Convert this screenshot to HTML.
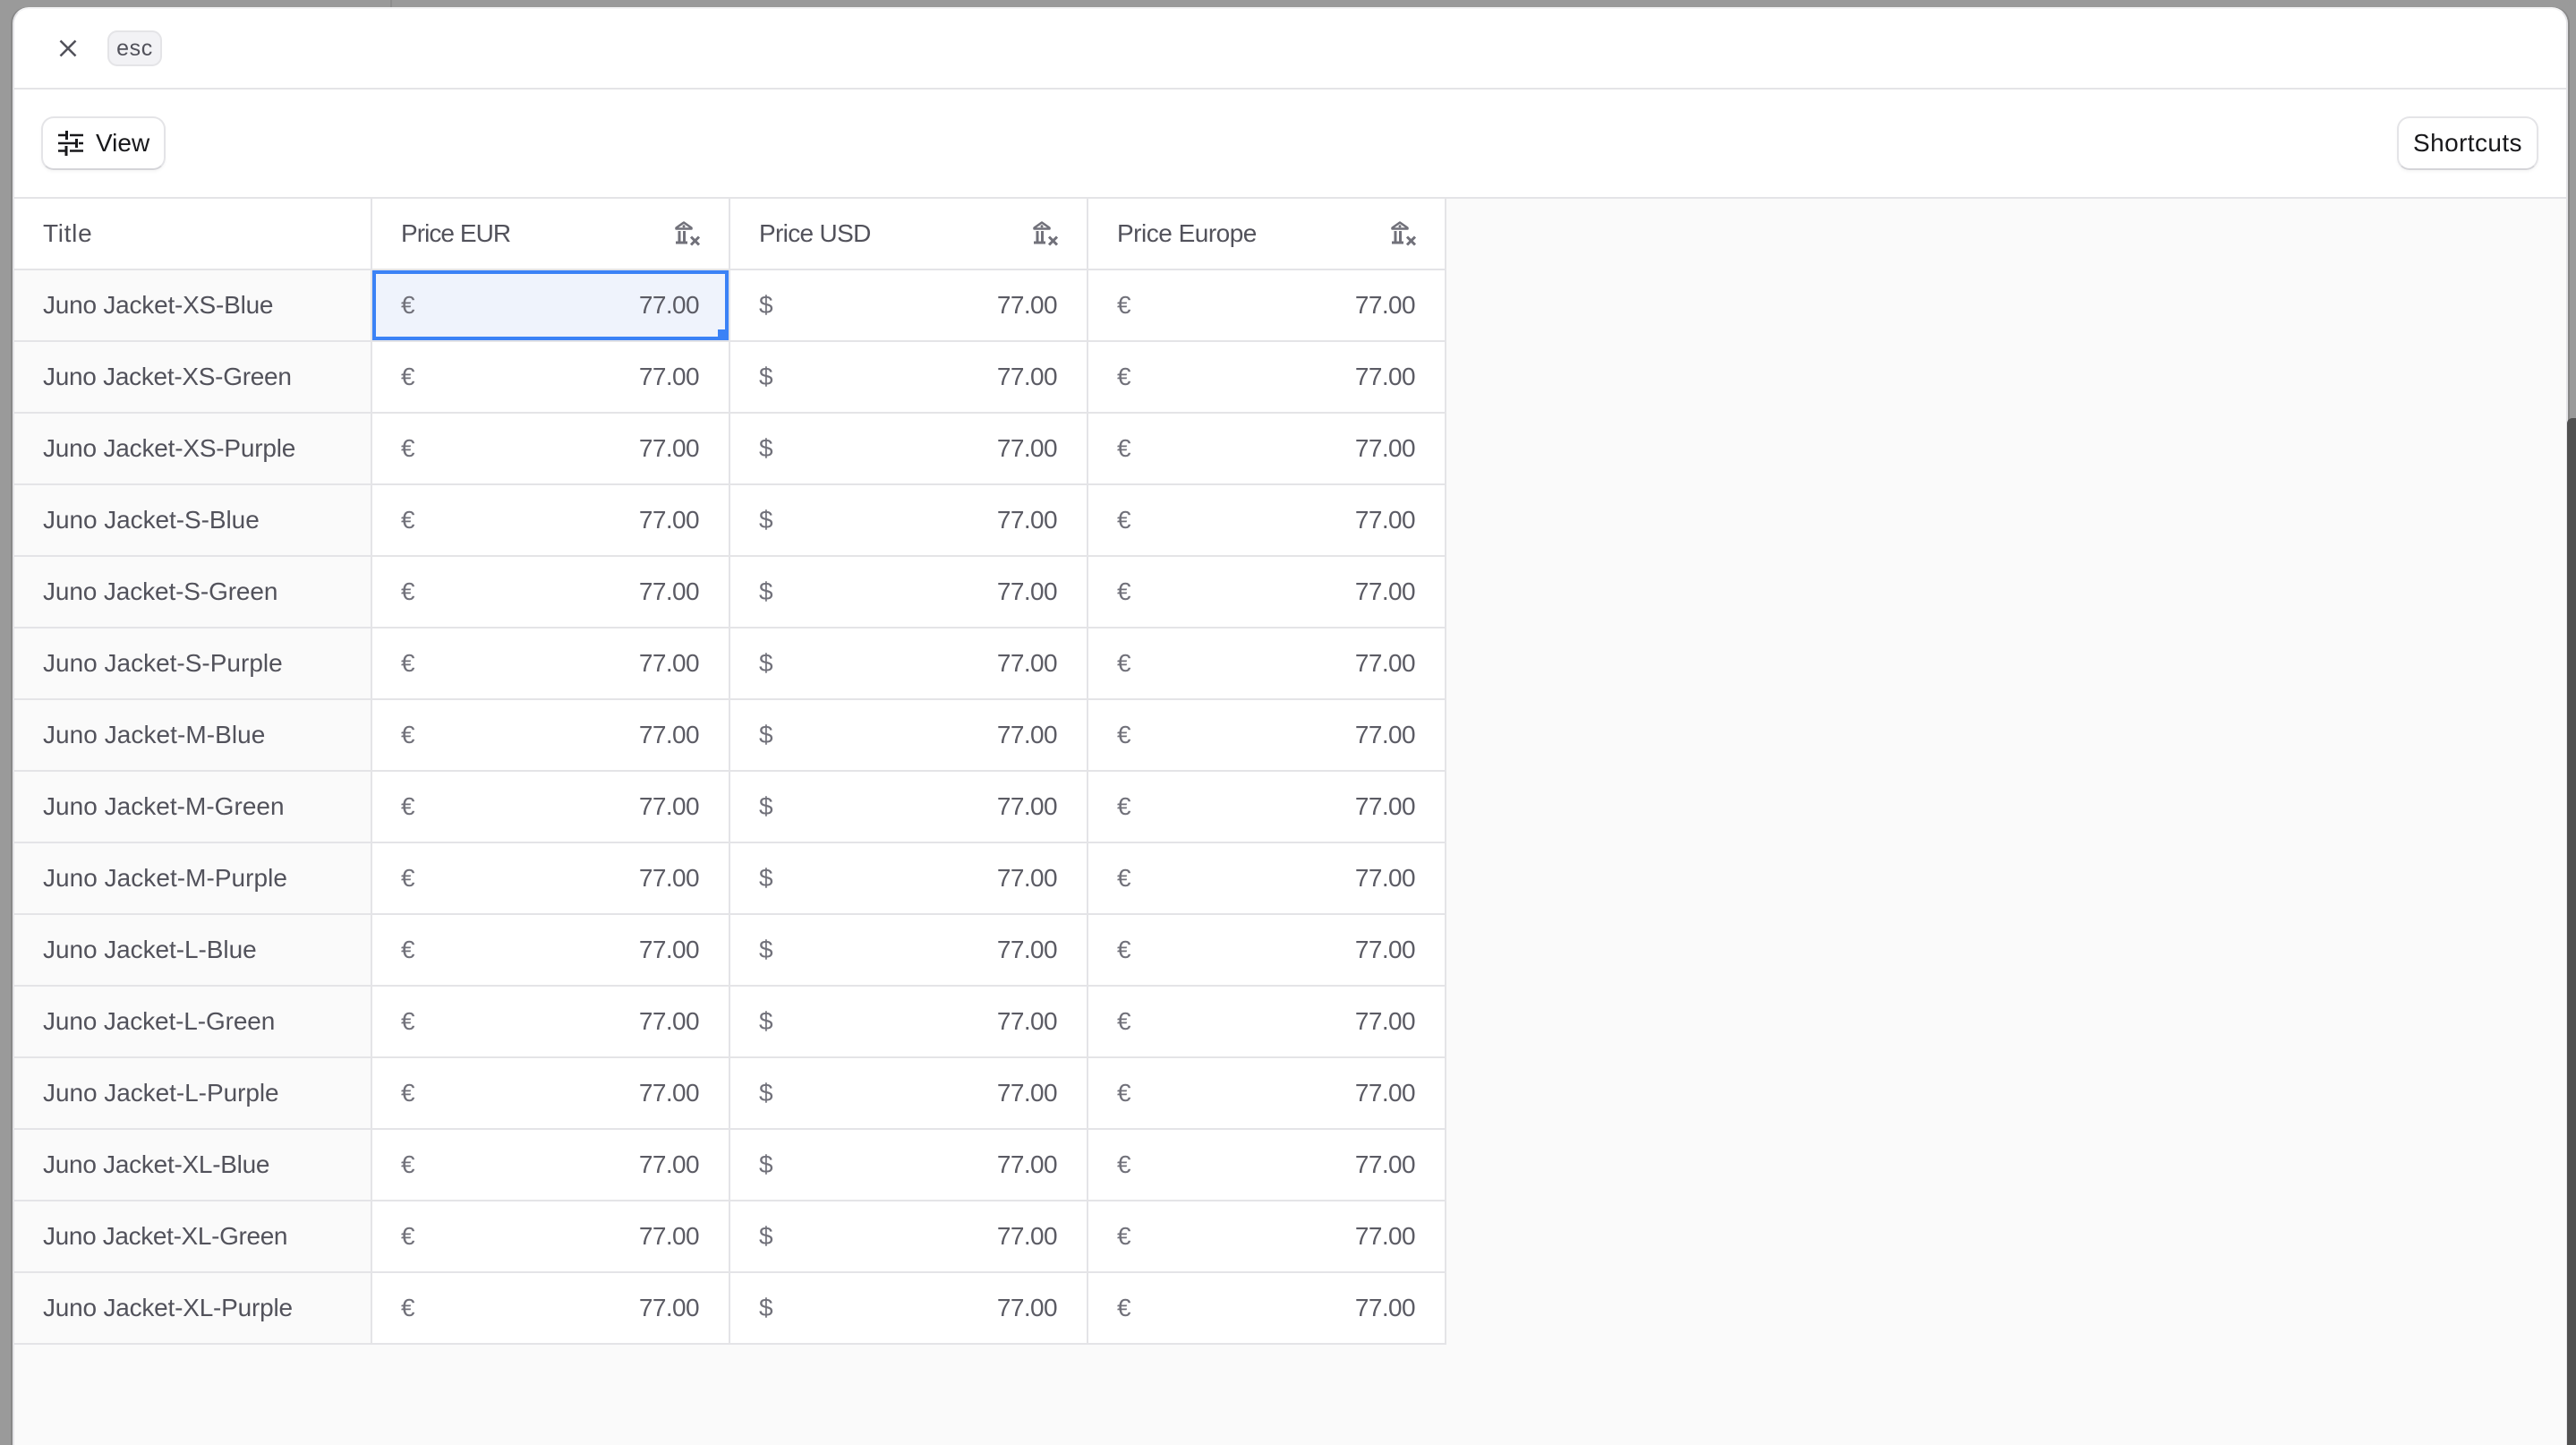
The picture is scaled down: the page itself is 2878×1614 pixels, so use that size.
<!DOCTYPE html>
<html><head><meta charset="utf-8"><style>
*{box-sizing:border-box;margin:0;padding:0}
html,body{width:2878px;height:1614px;overflow:hidden;background:#9a9a9a;font-family:"Liberation Sans",sans-serif}
body{position:relative}
.abs{position:absolute}
#modal{position:absolute;left:14px;top:8px;width:2855px;height:1606px;background:#fafafa;border-radius:18px 18px 0 0;border:2px solid #e4e4e7;border-top-color:#f4f4f5;border-bottom:0;box-shadow:-2px 0 0 #878787,2px 0 0 #878787;overflow:hidden}
#bar{position:absolute;left:16px;top:10px;width:2851px;height:212px;background:#fff;border-radius:16px 16px 0 0}
.hl{position:absolute;left:16px;width:2851px;height:2px;background:#e4e4e7}
.btn{position:absolute;top:130px;height:60px;background:#fff;border:2px solid #e4e4e7;border-bottom-color:#d4d4d8;border-radius:14px;color:#18181b;font-size:28px;line-height:56px;box-shadow:0 2px 3px rgba(0,0,0,.04);letter-spacing:.4px}
#grid{position:absolute;left:16px;top:222px;width:1600px;display:grid;grid-template-columns:400px 400px 400px 400px;grid-auto-rows:80px;font-size:28px;color:#52525b}
#grid>div{border-right:2px solid #e4e4e7;border-bottom:2px solid #e4e4e7;position:relative;background:#fff;line-height:78px;padding-left:32px;white-space:nowrap}
#grid>div.t{background:#fafafa}
#grid>div.n{color:#71717a}
#grid>div.n::after{content:"77.00";position:absolute;right:33px;top:0;color:#5b5b64;letter-spacing:-.6px}
#grid svg{position:absolute;right:32px;top:24px}
#sel{position:absolute;left:416px;top:302px;width:398px;height:78px;border:4px solid #3b82f6;background:#eff3fc;font-size:28px;line-height:70px;color:#71717a;padding-left:28px}
#sel span{position:absolute;right:29px;top:0;color:#5b5b64;letter-spacing:-.6px}
#sel i{position:absolute;right:0;bottom:0;width:8px;height:8px;background:#3b82f6}
</style></head><body>
<div class="abs" style="left:436px;top:0;width:2px;height:8px;background:#8d8d8d"></div>
<div id="modal"></div>
<div id="bar"></div>
<div class="hl" style="top:98px"></div>
<div class="hl" style="top:220px"></div>
<svg class="abs" style="left:64px;top:42px" width="24" height="24" viewBox="0 0 24 24"><path d="M3.500 3.500L20.500 20.500M20.500 3.500L3.500 20.500" stroke="#52525b" stroke-width="2.600" fill="none"/></svg>
<div class="abs" style="left:120px;top:34px;width:61px;height:40px;background:#f2f2f5;border:2px solid #e4e4e7;border-radius:11px;color:#52525b;font-size:25px;line-height:36px;text-align:center;letter-spacing:.6px">esc</div>
<div class="btn" style="left:46px;width:139px"><svg class="abs" style="left:17px;top:14px" width="28" height="28" viewBox="0 0 28 28"><path d="M0 5H10M13 5H28M0 14H20M23 14H28M0 22.500H8M13 22.500H28" stroke="#18181b" stroke-width="2.500" fill="none"/><path d="M9.500 0V10M20.500 9V19M9 17V28" stroke="#18181b" stroke-width="3" fill="none"/></svg><span class="abs" style="left:59px;top:0;letter-spacing:0">View</span></div>
<div class="btn" style="left:2678px;width:158px;text-align:center">Shortcuts</div>
<div id="grid">
<div class="h" style="letter-spacing:.7px">Title</div>
<div class="h" style="letter-spacing:-.95px">Price EUR<svg width="30" height="30" viewBox="0 0 30 30"><path d="M3.500 9.500H20.500V8.500L12 2.500L3.500 8.500Z" fill="none" stroke="#71717a" stroke-width="2.500" stroke-linejoin="round"/><circle cx="12" cy="6.800" r="1.500" fill="#71717a"/><path d="M7 12V24M12.500 12V24M3 25H16M20 18.500L29 27.500M29 18.500L20 27.500" stroke="#71717a" stroke-width="3" fill="none"/></svg></div>
<div class="h" style="letter-spacing:-.67px">Price USD<svg width="30" height="30" viewBox="0 0 30 30"><path d="M3.500 9.500H20.500V8.500L12 2.500L3.500 8.500Z" fill="none" stroke="#71717a" stroke-width="2.500" stroke-linejoin="round"/><circle cx="12" cy="6.800" r="1.500" fill="#71717a"/><path d="M7 12V24M12.500 12V24M3 25H16M20 18.500L29 27.500M29 18.500L20 27.500" stroke="#71717a" stroke-width="3" fill="none"/></svg></div>
<div class="h" style="letter-spacing:-.5px">Price Europe<svg width="30" height="30" viewBox="0 0 30 30"><path d="M3.500 9.500H20.500V8.500L12 2.500L3.500 8.500Z" fill="none" stroke="#71717a" stroke-width="2.500" stroke-linejoin="round"/><circle cx="12" cy="6.800" r="1.500" fill="#71717a"/><path d="M7 12V24M12.500 12V24M3 25H16M20 18.500L29 27.500M29 18.500L20 27.500" stroke="#71717a" stroke-width="3" fill="none"/></svg></div>
<div class="t" style="letter-spacing:-.22px">Juno Jacket-XS-Blue</div><div class="n">€</div><div class="n">$</div><div class="n">€</div>
<div class="t" style="letter-spacing:-.28px">Juno Jacket-XS-Green</div><div class="n">€</div><div class="n">$</div><div class="n">€</div>
<div class="t" style="letter-spacing:-.2px">Juno Jacket-XS-Purple</div><div class="n">€</div><div class="n">$</div><div class="n">€</div>
<div class="t" style="letter-spacing:-.06px">Juno Jacket-S-Blue</div><div class="n">€</div><div class="n">$</div><div class="n">€</div>
<div class="t" style="letter-spacing:-.12px">Juno Jacket-S-Green</div><div class="n">€</div><div class="n">$</div><div class="n">€</div>
<div class="t" style="letter-spacing:0">Juno Jacket-S-Purple</div><div class="n">€</div><div class="n">$</div><div class="n">€</div>
<div class="t" style="letter-spacing:.05px">Juno Jacket-M-Blue</div><div class="n">€</div><div class="n">$</div><div class="n">€</div>
<div class="t" style="letter-spacing:.02px">Juno Jacket-M-Green</div><div class="n">€</div><div class="n">$</div><div class="n">€</div>
<div class="t" style="letter-spacing:.03px">Juno Jacket-M-Purple</div><div class="n">€</div><div class="n">$</div><div class="n">€</div>
<div class="t" style="letter-spacing:-.06px">Juno Jacket-L-Blue</div><div class="n">€</div><div class="n">$</div><div class="n">€</div>
<div class="t" style="letter-spacing:-.12px">Juno Jacket-L-Green</div><div class="n">€</div><div class="n">$</div><div class="n">€</div>
<div class="t" style="letter-spacing:-.05px">Juno Jacket-L-Purple</div><div class="n">€</div><div class="n">$</div><div class="n">€</div>
<div class="t" style="letter-spacing:-.27px">Juno Jacket-XL-Blue</div><div class="n">€</div><div class="n">$</div><div class="n">€</div>
<div class="t" style="letter-spacing:-.35px">Juno Jacket-XL-Green</div><div class="n">€</div><div class="n">$</div><div class="n">€</div>
<div class="t" style="letter-spacing:-.21px">Juno Jacket-XL-Purple</div><div class="n">€</div><div class="n">$</div><div class="n">€</div>
</div>
<div id="sel">€<span>77.00</span><i></i></div>
<div class="abs" style="left:2868px;top:467px;width:10px;height:1147px;background:#505050;border-radius:6px 0 0 0"></div>
</body></html>
